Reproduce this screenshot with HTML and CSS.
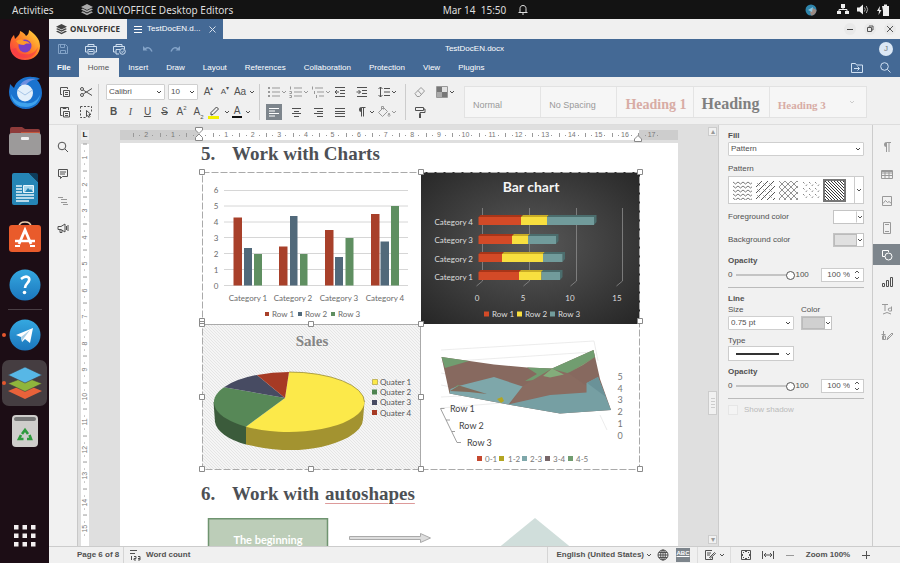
FILE: index.html
```html
<!DOCTYPE html>
<html lang="en">
<head>
<meta charset="utf-8">
<title>TestDocEN.docx - ONLYOFFICE</title>
<link rel="stylesheet" href="styles.css">
</head>
<body>
<svg class="sprite" aria-hidden="true">
  <defs>
    <symbol id="caret" viewBox="0 0 6 6"><path d="M1 2l2 2 2-2" fill="none" stroke="currentColor"/></symbol>
    <symbol id="list" viewBox="0 0 16 16"><path d="M6 4h8M6 8h8M6 12h8" stroke="currentColor" fill="none"/><path d="M2 4h2M2 8h2M2 12h2" stroke="currentColor" stroke-width="2"/></symbol>
    <symbol id="stack" viewBox="0 0 12 12"><path d="M6 0l6 3-6 3-6-3z"/><path d="M0 5.400l1.800-.9L6 6.700l4.200-2.200 1.800.9-6 3z"/><path d="M0 8.200l1.800-.9L6 9.500l4.200-2.200 1.800.9-6 3z"/></symbol>
    <pattern id="weave" width="3" height="3" patternUnits="userSpaceOnUse"><path d="M0 0l3 3" stroke="#dedede" stroke-width=".7"/></pattern>
    <pattern id="p-zig" width="5" height="4" patternUnits="userSpaceOnUse"><path d="M0 1l2.500 2L5 1" fill="none" stroke="#555" stroke-width=".8"/></pattern>
    <pattern id="p-slash" width="6" height="6" patternUnits="userSpaceOnUse"><path d="M0 6l6-6" fill="none" stroke="#444" stroke-width=".9"/><path d="M1 2l3 3" fill="none" stroke="#777" stroke-width=".6"/></pattern>
    <pattern id="p-diamond" width="6" height="6" patternUnits="userSpaceOnUse"><path d="M0 0l6 6M0 6l6-6" fill="none" stroke="#666" stroke-width=".7"/></pattern>
    <pattern id="p-dash" width="6" height="6" patternUnits="userSpaceOnUse"><path d="M1 1l1.500 1.500M5 3.500L3.800 5" stroke="#666" stroke-width=".8"/></pattern>
    <pattern id="p-diag" width="3" height="3" patternUnits="userSpaceOnUse"><path d="M-1-1l5 5M-1 2l2 2M2-1l2 2" stroke="#222" stroke-width=".9"/></pattern>
    <radialGradient id="dark" cx=".5" cy=".48" r=".7"><stop offset="0" stop-color="#595959"/><stop offset="1" stop-color="#272727"/></radialGradient>
    <linearGradient id="fox" x1="0" y1="1" x2="1" y2="0"><stop offset="0" stop-color="#f5294d"/><stop offset=".5" stop-color="#ff7a26"/><stop offset="1" stop-color="#ffe23f"/></linearGradient>
    <linearGradient id="sky" x1="0" y1="0" x2="0" y2="1"><stop offset="0" stop-color="#35a8e0"/><stop offset="1" stop-color="#1b76bd"/></linearGradient>
  </defs>
</svg>

<header class="sysbar">
  <button class="activities">Activities</button>
  <button class="sys-app"><svg width="12" height="12"><use href="#stack"/></svg>ONLYOFFICE Desktop Editors</button>
  <div class="clock"><time>Mar 14&nbsp; 15:50</time>
    <svg width="10" height="11" viewBox="0 0 10 11" fill="none" stroke="currentColor"><path d="M2 8V4.500C2 2.500 3.300 1.500 5 1.500S8 2.500 8 4.500V8M.5 8.500h9M4 10h2"/></svg>
  </div>
  <div class="tray">
    <svg width="12" height="12" viewBox="0 0 12 12"><circle cx="6" cy="6" r="5.500" fill="#2f86ad"/><path d="M6 11.500A5.500 5.500 0 0 0 11.500 6L8 4 5 8z" fill="#9b8a83"/><path d="M3 6l5-3-1 5z" fill="#8cc7df"/></svg>
    <svg class="net" width="12" height="11" viewBox="0 0 12 11" fill="#eee"><path d="M4 0h4v4H4zM0 7h4v3H0zM8 7h4v3H8z"/><path d="M6 3v3M2 8V5.500h8V8" fill="none" stroke="#eee"/></svg>
    <svg width="12" height="11" viewBox="0 0 12 11" fill="#eee"><path d="M0 3.500h2.500L6 .5v10l-3.500-3H0z"/><path d="M7.500 3.500q1.500 2 0 4M9.300 2q2.700 3.500 0 7" fill="none" stroke="#aaa"/></svg>
    <svg width="13" height="12" viewBox="0 0 13 12" fill="#eee"><path d="M5 2h2V.5h3V2h2v10H6V7z"/><path d="M3 2L0 7h2l-.5 4 3-5h-2z"/></svg>
  </div>
</header>

<div class="desktop">
  <nav class="dock" aria-label="Dock">
    <button aria-label="Firefox"><svg width="32" height="32" viewBox="0 0 32 32"><path d="M16 31C7 31 1 25 1 17 1 11 3 8 5 6l1 4 3-3c2-2 2-4 2-5 3 1 5 3 6 5 2-1 3-3 3-6 6 4 11 9 11 16 0 8-6 14-15 14z" fill="url(#fox)"/><path d="M3 20c2 5 6 8 12 9 8 1 13-5 14-11-3 6-8 8-14 7-5 0-7-3-8-6z" fill="#f4364c" opacity=".6"/><circle cx="16" cy="17" r="6.500" fill="#7b3fc4"/><path d="M7 12c3-2 6-2 8 0 3 0 5 1 6 3-3-1-5 0-6 1-4 0-6-1-8-4z" fill="#ff9a2a"/></svg></button>
    <button aria-label="Thunderbird"><svg width="34" height="34" viewBox="0 0 34 34"><path d="M18 33C8 33 1 25 1 16c0-3 1-5 1-8l4 4C9 4 16 0 24 1c2 0 5 0 8 2l-3 1c3 3 5 8 5 13 0 9-7 16-16 16z" fill="#1a73cf"/><path d="M3 18C4 28 11 31 18 31c8 0 13-5 14-12-3 6-8 9-14 8C11 27 6 24 3 18z" fill="#3fa3ee"/><path d="M12 9C16 3 22 2 28 3c-5 1-8 3-10 6z" fill="#6d8fe0"/><ellipse cx="17" cy="17" rx="8" ry="8.500" fill="#e3effa"/><path d="M9.500 14l7.500 5 7.500-5" fill="none" stroke="#a7c5e6"/></svg></button>
    <button aria-label="Files"><svg width="32" height="30" viewBox="0 0 32 30"><path d="M1 3a2 2 0 0 1 2-2h10l3 2h13a2 2 0 0 1 2 2v8H1z" fill="#8e3b3a"/><path d="M12 6h19v6H12z" fill="#c4573d"/><rect y="7" width="32" height="22" rx="3" fill="#9c9a9a"/><rect x="12" y="11" width="8" height="3" rx="1" fill="#f2f2f2"/></svg></button>
    <button aria-label="LibreOffice Writer"><svg width="26" height="32" viewBox="0 0 26 32"><path d="M2 0h15l9 9v21a2 2 0 0 1-2 2H2a2 2 0 0 1-2-2V2a2 2 0 0 1 2-2z" fill="#2585b5"/><path d="M17 0l9 9V2a2 2 0 0 0-2-2z" fill="#0d3d5c"/><path d="M4 13h6M4 16h6M4 19h6M4 22h18M4 25h18M4 28h13" stroke="#e8f5fb" stroke-width="1.500"/><path d="M11.500 12.500h10v7h-10z" fill="#a9d8ec" stroke="#e8f5fb"/><path d="M13 19l3-4 2 2 1-1 2 3z" fill="#2585b5"/></svg></button>
    <button aria-label="Ubuntu Software"><svg width="32" height="32" viewBox="0 0 32 32"><path d="M10 6q0-5 6-5t6 5" fill="none" stroke="#e9cfae" stroke-width="1.500"/><rect y="4" width="32" height="27" rx="3" fill="#e95b2b"/><path d="M10 23l6-14 6 14" fill="none" stroke="#fff" stroke-width="2.800"/><path d="M6 20h20" stroke="#fff" stroke-width="2.500"/><path d="M6 25h5M21 25h5" stroke="#fff" stroke-width="2"/></svg></button>
    <button aria-label="Help"><svg width="32" height="32" viewBox="0 0 32 32"><circle cx="16" cy="16" r="15.500" fill="url(#sky)"/><path d="M12 10q5-4 8-1c2 4-4 5-4 10" fill="none" stroke="#fff" stroke-width="2.600"/><circle cx="15.500" cy="23.500" r="1.800" fill="#fff"/></svg></button>
    <hr>
    <button class="running" aria-label="Telegram"><svg width="32" height="32" viewBox="0 0 32 32"><circle cx="16" cy="16" r="15.500" fill="url(#sky)"/><path d="M7 16l17-7-3 15-5-4-3 3-1-5z" fill="#fff"/><path d="M12 18l9-7-6 8-2 3z" fill="#a9cfe6"/></svg></button>
    <button class="running current" aria-label="ONLYOFFICE"><svg width="34" height="33" viewBox="0 0 34 33"><path d="M17 17l17 7-17 8L0 24z" fill="#e8623a"/><path d="M17 10l17 6.500-17 8-17-8z" fill="#8fb53c" stroke="#453d41" stroke-width=".6"/><path d="M17 0l17 8-17 8L0 8z" fill="#57b7e6" stroke="#453d41" stroke-width=".6"/></svg></button>
    <button aria-label="Trash"><svg width="26" height="32" viewBox="0 0 26 32"><rect width="26" height="32" rx="4" fill="#cfcdcb"/><rect x="2" y="2" width="22" height="4" rx="2" fill="#777"/><g fill="none" stroke="#2f9a3c" stroke-width="2.600"><path d="M10 19l3-4 3 4"/><path d="M17.500 20l1.500 4h-4M11.500 24H7l2-4"/></g></svg></button>
    <button class="apps" aria-label="Show applications"><svg width="22" height="22" viewBox="0 0 22 22" fill="#f3eff0"><path d="M0 0h4.500v4.500H0zM8.500 0H13v4.500H8.500zM17 0h4.500v4.500H17zM0 8.500h4.500V13H0zM8.500 8.500H13V13H8.500zM17 8.500h4.500V13H17zM0 17h4.500v4.500H0zM8.500 17H13v4.500H8.500zM17 17h4.500v4.500H17z"/></svg></button>
  </nav>

  <div class="app">
    <div class="tabs">
      <button class="tab brand"><svg width="11" height="11"><use href="#stack"/></svg>ONLYOFFICE</button>
      <div class="tab open"><svg width="8" height="8" viewBox="0 0 8 8" stroke="#fff"><path d="M0 1.500h8M0 4.500h8M0 7.500h8"/></svg><span>TestDocEN.d...</span><button aria-label="Close tab"><svg width="7" height="7" viewBox="0 0 7 7" stroke="#d5dfeb"><path d="M.5.5l6 6M6.500.5l-6 6"/></svg></button></div>
      <div class="window">
        <button aria-label="Minimize"><svg width="8" height="8" viewBox="0 0 8 8"><path d="M1 4.500h6" stroke="#444"/></svg></button>
        <button aria-label="Restore"><svg width="8" height="8" viewBox="0 0 8 8" fill="none" stroke="#555"><path d="M1.500 2.500h4v4h-4zM3 1.500V1h4v4h-1"/></svg></button>
        <button aria-label="Close"><svg width="8" height="8" viewBox="0 0 8 8" stroke="#555"><path d="M1 1l6 6M7 1L1 7"/></svg></button>
      </div>
    </div>

    <div class="head">
      <div class="titlebar">
        <div class="quick">
          <button aria-label="Save" class="dim"><svg width="12" height="12" viewBox="0 0 12 12" fill="none" stroke="currentColor"><path d="M1.500 1.500h7l2 2v7h-9zM3.500 1.500v3h4v-3M3.500 10.500v-3h5v3"/></svg></button>
          <button aria-label="Print"><svg width="12" height="12" viewBox="0 0 12 12" fill="none" stroke="currentColor"><path d="M3 3.500v-2h6v2M2.500 9H.5V3.500h11V9h-2M3 6.500h6v4.500H3zM4 8.500h4"/></svg></button>
          <button aria-label="Quick print"><svg width="13" height="12" viewBox="0 0 13 12" fill="none" stroke="currentColor"><path d="M3 3.500v-2h6v2M2.500 9H.5V3.500h11V6M6 11H3V6.500h4"/><circle cx="9.500" cy="8.500" r="2.800"/><path d="M8.300 8.500l1 1 1.500-2"/></svg></button>
          <button aria-label="Undo" class="dim"><svg width="11" height="8" viewBox="0 0 11 8"><path d="M1 1v4.500h4.500z" fill="currentColor"/><path d="M3 4q4-3.500 7 2.500" fill="none" stroke="currentColor" stroke-width="1.500"/></svg></button>
          <button aria-label="Redo" class="dim"><svg width="11" height="8" viewBox="0 0 11 8"><path d="M10 1v4.500H5.500z" fill="currentColor"/><path d="M8 4Q4 .5 1 6.500" fill="none" stroke="currentColor" stroke-width="1.500"/></svg></button>
        </div>
        <div class="doc-name">TestDocEN.docx</div>
        <button class="avatar" aria-label="User">J</button>
      </div>
      <nav class="menu">
        <button class="file">File</button><button class="active">Home</button><button>Insert</button><button>Draw</button><button>Layout</button><button>References</button><button>Collaboration</button><button>Protection</button><button>View</button><button>Plugins</button>
        <span class="menu-end">
          <button aria-label="Open file location"><svg width="12" height="10" viewBox="0 0 12 10" fill="none" stroke="#cfe0f2"><path d="M.5.5h4l1 1.500h6v7.500H.5zM3 5.500h5M6.500 3.500l2 2-2 2"/></svg></button>
          <button aria-label="Search"><svg width="11" height="11" viewBox="0 0 11 11" fill="none" stroke="#cfe0f2"><circle cx="4.500" cy="4.500" r="3.800"/><path d="M7.500 7.500l3 3"/></svg></button>
        </span>
      </nav>
    </div>

    <div class="toolbar">
      <div class="group clip">
        <div class="row">
          <button aria-label="Copy"><svg width="12" height="12" viewBox="0 0 12 12" fill="none" stroke="currentColor"><path d="M3 8.500H1.500v-7h7V3M4.500 4.500h6v6h-6zM6 6.500h3M6 8.500h3"/></svg></button>
          <button aria-label="Cut"><svg width="12" height="12" viewBox="0 0 12 12" fill="none" stroke="currentColor"><circle cx="2" cy="3" r="1.500"/><circle cx="2" cy="9" r="1.500"/><path d="M3.200 4L12 9.500M3.200 8L12 2.500"/></svg></button>
        </div>
        <div class="row">
          <button aria-label="Paste"><svg width="12" height="12" viewBox="0 0 12 12" fill="none" stroke="currentColor"><path d="M3.500 9.500h-2v-8h8V4M4 1.500v1h3v-1M4.500 5.500h6v5.500h-6zM6 7.500h3M6 9.500h3"/></svg></button>
          <button aria-label="Select"><svg width="12" height="12" viewBox="0 0 12 12" fill="none" stroke="currentColor"><path d="M.5.500h11v5M.5.500v11H6" stroke-dasharray="2 1.500"/><path d="M6.500 4.500v6l1.500-1 1 2 1-1-1-2h2z"/></svg></button>
        </div>
      </div>
      <div class="group font">
        <div class="row">
          <select class="family" aria-label="Font"><option>Calibri</option></select>
          <select class="size" aria-label="Font size"><option>10</option></select>
          <button aria-label="Increase font size">A<sup>▴</sup></button><button aria-label="Decrease font size" class="smaller">A<sup>▾</sup></button><button class="wide" aria-label="Change case">Aa<svg width="6" height="6"><use href="#caret"/></svg></button>
        </div>
        <div class="row marks">
          <button><b>B</b></button><button><i class="serif">I</i></button><button><u>U</u></button><button><s>S</s></button><button>A<sup>2</sup></button><button>A<sub>2</sub></button>
          <button class="wide" aria-label="Highlight color"><svg width="13" height="13" viewBox="0 0 13 13"><path d="M3 9V6.500L8.500 1l2 2L5 8.500z" fill="none" stroke="#444"/><path d="M0 11.500h11" stroke="#f3f000" stroke-width="3"/></svg><svg width="6" height="6"><use href="#caret"/></svg></button>
          <button class="wide" aria-label="Font color"><span class="fontcolor">A</span><svg width="6" height="6"><use href="#caret"/></svg></button>
        </div>
      </div>
      <div class="group para">
        <div class="row">
          <button class="off" aria-label="Bullets"><svg width="16" height="16"><use href="#list"/></svg><svg width="6" height="6"><use href="#caret"/></svg></button>
          <button class="off" aria-label="Numbering"><svg width="16" height="16" viewBox="0 0 16 16" fill="none" stroke="currentColor"><path d="M6 4h8M6 8h8M6 12h8M2.500 2.500v3M1.500 7.500h2v2h-2M1.500 11.500h2v2h-2"/></svg><svg width="6" height="6"><use href="#caret"/></svg></button>
          <button class="off" aria-label="Multilevel list"><svg width="16" height="16" viewBox="0 0 16 16" fill="none" stroke="currentColor"><path d="M5 4h8M7 8h7M9 12h5M2.500 2.500v3M4.500 7v3M6.500 11v3"/></svg><svg width="6" height="6"><use href="#caret"/></svg></button>
          <button aria-label="Decrease indent"><svg width="16" height="16" viewBox="0 0 16 16" fill="none" stroke="currentColor"><path d="M3 3.500h10M8 6.500h5M8 9.500h5M3 12.500h10M7 8H3M5 6L3 8l2 2"/></svg></button>
          <button aria-label="Increase indent"><svg width="16" height="16" viewBox="0 0 16 16" fill="none" stroke="currentColor"><path d="M3 3.500h10M8 6.500h5M8 9.500h5M3 12.500h10M2.500 8h4M4.500 6l2 2-2 2"/></svg></button>
          <button aria-label="Line spacing"><svg width="16" height="16" viewBox="0 0 16 16" fill="none" stroke="currentColor"><path d="M8 4.500h6M8 8h6M8 11.500h6M4.500 3v10M2.500 5l2-2 2 2M2.500 11l2 2 2-2"/></svg><svg width="6" height="6"><use href="#caret"/></svg></button>
        </div>
        <div class="row">
          <button aria-label="Align left"><svg class="pressed" width="16" height="16" viewBox="0 0 16 16" stroke="currentColor"><path d="M3 4.500h10M3 7h6M3 9.500h10M3 12h6"/></svg></button>
          <button aria-label="Align center"><svg width="16" height="16" viewBox="0 0 16 16" stroke="currentColor"><path d="M4 4.500h9M6 7.500h5M4 9.500h9M6 12.500h5"/></svg></button>
          <button aria-label="Align right"><svg width="16" height="16" viewBox="0 0 16 16" stroke="currentColor"><path d="M4 4.500h9M7 7.500h6M4 9.500h9M7 12.500h6"/></svg></button>
          <button aria-label="Justify"><svg width="16" height="16" viewBox="0 0 16 16" stroke="currentColor"><path d="M3 4.500h10M3 7.500h10M3 9.500h10M3 12.500h10"/></svg></button>
          <button aria-label="Nonprinting characters"><svg width="16" height="16" viewBox="0 0 16 16"><path d="M7.500 12.500v-9h4M9.500 3.500v9" fill="none" stroke="currentColor"/><path d="M7.500 3a2.500 2.500 0 0 0 0 5z" fill="currentColor"/></svg><svg width="6" height="6"><use href="#caret"/></svg></button>
          <button class="off" aria-label="Shading"><svg width="16" height="16" viewBox="0 0 16 16" fill="none" stroke="currentColor"><path d="M2.500 8.500l5-5 4 4-5 5zM5.500 5.500V2.500h2v3M13 9q-2 3 0 3.500 2-.5 0-3.500"/></svg><svg width="6" height="6"><use href="#caret"/></svg></button>
        </div>
      </div>
      <div class="group misc">
        <div class="row">
          <button class="off" aria-label="Clear style"><svg width="16" height="16" viewBox="0 0 16 16" fill="none" stroke="currentColor"><path d="M3 9.500l6-6 3.500 3.500-5 5.500H5zM6 6.500l3.500 4"/></svg></button>
          <button aria-label="Color scheme"><svg width="16" height="16" viewBox="0 0 16 16"><path d="M3 3h5v5H3z" fill="#777"/><path d="M8 3h5v5H8z" fill="#e2e2e2"/><path d="M3 8h5v5H3z" fill="#aaa"/><path d="M8 8h5v5H8z" fill="#777"/><path d="M2.500 2.500h11v11h-11z" fill="none" stroke="#999"/></svg><svg width="6" height="6"><use href="#caret"/></svg></button>
        </div>
        <div class="row">
          <button aria-label="Copy style"><svg width="16" height="16" viewBox="0 0 16 16" fill="none" stroke="currentColor"><path d="M3.500 3.500h8v3h-8zM11.500 5h1.500v3.500H8V10"/><path d="M8 9.500V14" stroke-width="2"/></svg></button>
        </div>
      </div>
      <div class="styles">
        <button>Normal</button><button>No Spacing</button><button class="h1">Heading 1</button><button class="h2">Heading</button><button class="h3">Heading 3</button>
        <button class="more" aria-label="More styles"><svg width="6" height="6"><use href="#caret"/></svg></button>
      </div>
    </div>

    <div class="work">
      <aside class="left">
        <button aria-label="Find"><svg width="12" height="12" viewBox="0 0 12 12" fill="none" stroke="currentColor"><circle cx="5" cy="5" r="3.800"/><path d="M8 8l3 3"/></svg></button>
        <button aria-label="Comments"><svg width="12" height="12" viewBox="0 0 12 12" fill="none" stroke="currentColor"><path d="M1.500 1.500h9v7h-5l-2 2v-2h-2zM3 4h6M3 6h5"/></svg></button>
        <button aria-label="Headings" class="faint"><svg width="12" height="12" viewBox="0 0 12 12" stroke="currentColor"><path d="M1 2.500h5M4 4.500h6M4 7.500h6M6 9.500h5"/></svg></button>
        <button aria-label="Feedback"><svg width="12" height="12" viewBox="0 0 12 12" fill="none" stroke="currentColor"><path d="M1 4.500h3L8 2v8L4 7.500H1zM3 8v2.500h2V8M9.500 4v4M11 3v6"/></svg></button>
      </aside>

      <div class="vside">
        <span class="corner">L</span>
        <div class="vruler">
          <span>1</span><span>2</span><span>3</span><span>4</span><span>5</span><span>6</span><span>7</span><span>8</span><span>9</span><span>10</span><span>11</span><span>12</span><span>13</span><span>14</span><span>15</span>
        </div>
      </div>

      <main class="canvas">
        <div class="hruler">
          <span>2</span><span>1</span><span class="zero"></span><span>1</span><span>2</span><span>3</span><span>4</span><span>5</span><span>6</span><span>7</span><span>8</span><span>9</span><span>10</span><span>11</span><span>12</span><span>13</span><span>14</span><span>15</span><span>16</span><span>17</span>
          <svg class="indent start" width="8" height="14" viewBox="0 0 8 14" fill="#fff" stroke="#888"><path d="M.5.500h7v2.500L4 6.500.5 3zM4 7l3.500 3.500v3h-7v-3z"/></svg>
          <svg class="indent end" width="8" height="7" viewBox="0 0 8 7" fill="#fff" stroke="#888"><path d="M4 .5L7.500 4v2.500h-7V4z"/></svg>
        </div>
        <article class="page">
          <h1><span>5.</span>Work with Charts</h1>
          <div class="charts">
            <svg viewBox="202 172 219 152" role="img" aria-label="Column chart">
              <path d="M224 190.500h184M224 206h184M224 222h184M224 237.500h184M224 253.500h184M224 269.500h184M224 285.500h184" stroke="#d6d6d6"/>
              <g fill="#a8402a"><path d="M233.500 217.500h8.500v68h-8.500zM279 246.500h8.500v39H279zM325 230h8.500v55.500H325zM371 214h8.500v71.500H371z"/></g>
              <g fill="#51697a"><path d="M244 248h8v37.500h-8zM290 216h7.500v69.500H290zM335 257h8v28.500h-8zM380.500 241.500h8.500v44h-8.500z"/></g>
              <g fill="#5f8f61"><path d="M254 254h8v31.500h-8zM300 254h7.500v31.500H300zM345.500 238h8v47.500h-8zM391 206h8v79.500h-8z"/></g>
              <g class="lato" fill="#6b6b6b" text-anchor="middle"><text x="216" y="193">6</text><text x="216" y="209">5</text><text x="216" y="225">4</text><text x="216" y="241">3</text><text x="216" y="257">2</text><text x="216" y="273">1</text><text x="216" y="289">0</text>
              <text x="248" y="301">Category 1</text><text x="293" y="301">Category 2</text><text x="339" y="301">Category 3</text><text x="385" y="301">Category 4</text></g>
              <g class="lato" fill="#6b6b6b"><text x="272" y="317">Row 1</text><text x="305" y="317">Row 2</text><text x="338" y="317">Row 3</text></g>
              <path d="M265 312h4v4h-4z" fill="#a8402a"/><path d="M298 312h4v4h-4z" fill="#51697a"/><path d="M331 312h4v4h-4z" fill="#5f8f61"/>
            </svg>
            <svg viewBox="421 172 219 152" role="img" aria-label="Bar chart">
              <path d="M421 172h219v152H421z" fill="url(#dark)"/>
              <text class="lato t14" x="531" y="192" fill="#f5f5f5" text-anchor="middle">Bar chart</text>
              <path d="M482.500 208v73l-6 5M529.500 208v73l-6 5M576.500 208v73l-6 5M622.500 208v73l-6 5" fill="none" stroke="#8c8c8c" stroke-width=".8"/>
              <g fill="#a83518"><path d="M478.500 217l2-2h42l-2 2zM478.500 236l2-2h34l-2 2zM478.500 254l2-2h24l-2 2zM478.500 272l2-2h41l-2 2z"/></g>
              <g fill="#c9ac25"><path d="M521 217l2-2h26l-2 2zM512 236l2-2h16l-2 2zM502 254l2-2h41l-2 2zM519 272l2-2h23l-2 2z"/></g>
              <g fill="#4b6d6d"><path d="M547 217l2-2h47.500v7l-2.500 3v-8zM528 236l2-2h28.500v7l-2.500 3v-8zM543 254l2-2h20v7l-2.500 3v-8zM541 272l2-2h19.500v7l-2.500 3v-8z"/></g>
              <g fill="#d34a27"><path d="M478.500 217H521v8h-42.500zM478.500 236H512v8h-33.500zM478.500 254H502v8h-23.500zM478.500 272H519v8h-40.500z"/></g>
              <g fill="#f8df3f"><path d="M521 217h26v8h-26zM512 236h16v8h-16zM502 254h41v8h-41zM519 272h22.500v8H519z"/></g>
              <g fill="#719b9b"><path d="M547 217h47v8h-47zM528 236h28v8h-28zM543 254h19.500v8H543zM541.500 272H560v8h-18.500z"/></g>
              <g class="lato" fill="#dedede" text-anchor="end"><text x="473" y="225">Category 4</text><text x="473" y="243">Category 3</text><text x="473" y="262">Category 2</text><text x="473" y="280">Category 1</text></g>
              <g class="lato" fill="#dedede" text-anchor="middle"><text x="477" y="301">0</text><text x="523" y="301">5</text><text x="570" y="301">10</text><text x="617" y="301">15</text></g>
              <g class="lato" fill="#dedede"><text x="492" y="317">Row 1</text><text x="525" y="317">Row 2</text><text x="558" y="317">Row 3</text></g>
              <path d="M484 311.500h5v5h-5z" fill="#d34a27"/><path d="M517 311.500h5v5h-5z" fill="#f8df3f"/><path d="M550 311.500h5v5h-5z" fill="#719b9b"/>
            </svg>
            <svg viewBox="202 324 219 145" role="img" aria-label="Sales pie chart">
              <path d="M202 324h219v145H202z" fill="#f5f5f5"/><path d="M202 324h219v145H202z" fill="url(#weave)"/>
              <text class="title" x="312" y="346" fill="#858585" text-anchor="middle">Sales</text>
              <path d="M213.500 402l1.500 20a75.500 30 0 0 0 31 22.500v-18z" fill="#3b5b3b"/>
              <path d="M246 426.500v18q60 14 102-7 15-9 15-18l1.500-17.500-60 20z" fill="#a39330"/>
              <path d="M285 398l4-26a75.500 30 0 1 1-43 54.700z" fill="#fce94a"/>
              <path d="M285 398l-39 28.700a75.500 30 0 0 1-22-39.500z" fill="#578857"/>
              <path d="M285 398l-61-10.800a75.500 30 0 0 1 33-12.300z" fill="#474b62"/>
              <path d="M285 398l-28-23.100A75.500 30 0 0 1 289 372z" fill="#a63a24"/>
              <path d="M289 372a75.500 30 0 0 1 75.500 30" fill="none" stroke="#8c7f2b" stroke-width=".7"/>
              <path d="M372.500 379.500h5v5h-5z" fill="#fce94a" stroke="#a39330" stroke-width=".6"/><path d="M372 389.500h5v5h-5z" fill="#4e8451"/><path d="M372 400h5v5h-5z" fill="#474b62"/><path d="M372 410h5v5h-5z" fill="#a63a24"/>
              <g class="lato" fill="#555"><text x="380" y="385">Quater 1</text><text x="380" y="395">Quater 2</text><text x="380" y="405">Quater 3</text><text x="380" y="416">Quater 4</text></g>
            </svg>
            <svg viewBox="421 324 219 145" role="img" aria-label="Surface chart">
              <path d="M441 350l153-9 4 20M441 362l152-10M441 373l10 2M441 385l10 2M441 397l20-1M441 408l60-5M600 415l7 15" fill="none" stroke="#e4e4e4" stroke-width=".7"/>
              <path d="M441.500 357L494 364.500 527 367.500 552 368.500 593.500 350 600 379 611 410 560 413.500 508 404.500 449.500 393.500z" fill="#87695f"/>
              <path d="M441.500 357l27.500 4-24 7zM527 367.500l25 1 41.500-18.500 1.500 7-25 15-15 6-30 3 12-7zM449 391l9-6 16 5z" fill="#719d70"/>
              <path d="M552 368.500l-30 18-12 17.500 40-9 36-1.500v-8l-17-12-15-4z" fill="#8a6c61"/>
              <path d="M543 376l9-7.500 12 6-14 3zM570 372l25-15-12 8z" fill="#83ad7b"/>
              <path d="M449.500 393.500l1-4.500 8-3L494 377l28.500 9.500-14 18z" fill="#7ea7aa"/>
              <path d="M450 391l9-5.500 28 8.500-18-2z" fill="#826c5c"/>
              <path d="M508 404.500L550 395l36.500-2.500V383l11.500-6 13 33-51 3.500z" fill="#769fa3"/>
              <path d="M587 383l11-6 8 20z" fill="#6a9298"/>
              <path d="M497 399l5-2 2 4-3 2z" fill="#b3a522"/>
              <path d="M440.500 408.500h4M440.500 408.500L457 442.500h4M446 420h4M452 431.500h3" fill="none" stroke="#888" stroke-width=".8"/>
              <g class="lato t9" fill="#444"><text x="450" y="412">Row 1</text><text x="459" y="429">Row 2</text><text x="467" y="446">Row 3</text></g>
              <g class="lato t9" fill="#777" text-anchor="middle"><text x="620" y="380">5</text><text x="620" y="392">4</text><text x="620" y="403">3</text><text x="620" y="415">2</text><text x="620" y="427">1</text><text x="620" y="439">0</text></g>
              <path d="M477 456h5v5h-5z" fill="#c5482f"/><path d="M499 456h5v5h-5z" fill="#b3a522"/><path d="M522 456h5v5h-5z" fill="#7ea7aa"/><path d="M545 456h5v5h-5z" fill="#776669"/><path d="M568 456h5v5h-5z" fill="#719d70"/>
              <g class="lato" fill="#777"><text x="485" y="462">0-1</text><text x="508" y="462">1-2</text><text x="530" y="462">2-3</text><text x="553" y="462">3-4</text><text x="576" y="462">4-5</text></g>
            </svg>
            <svg class="handles" viewBox="202 172 438 297" aria-hidden="true">
              <g fill="none" stroke="#aaa"><path d="M202.500 172.500h437v297h-437z" stroke-dasharray="7 2"/><path d="M202 324.500h219M420.500 324v145"/></g>
              <g fill="#fff" stroke="#8a8a8a"><path d="M199.500 169.500h5v5h-5zM418.500 169.500h5v5h-5zM637.500 169.500h5v5h-5zM199.500 318.500h5v5h-5zM637.500 318.500h5v5h-5zM199.500 321.500h5v5h-5zM308.500 321.500h5v5h-5zM418.500 321.500h5v5h-5zM199.500 394.500h5v5h-5zM418.500 394.500h5v5h-5zM199.500 466.500h5v5h-5zM308.500 466.500h5v5h-5zM418.500 466.500h5v5h-5zM637.500 466.500h5v5h-5z"/></g>
            </svg>
          </div>
          <h1 class="second"><span>6.</span>Work with <em>autoshapes</em></h1>
          <svg class="shapes" viewBox="202 518 438 36" role="img" aria-label="Flowchart shapes">
            <path d="M208.500 518.800h119v40h-119z" fill="#bccdb8" stroke="#6f9470" stroke-width="1.500"/>
            <text class="lato t11" x="268" y="544" fill="#fff" text-anchor="middle">The beginning</text>
            <path d="M349.500 536.500h71v-3l10 4.500-10 4.500v-3h-71z" fill="#ddd" stroke="#aaa"/>
            <path d="M535 518l44 36h-88z" fill="#d0dedb"/>
          </svg>
        </article>
      </main>

      <div class="scroll">
        <button aria-label="Scroll up">▴</button>
        <span class="thumb"></span>
        <button aria-label="Scroll down">▾</button>
      </div>

      <aside class="panel">
        <label class="strong" for="fill">Fill</label>
        <select id="fill"><option>Pattern</option></select>
        <div class="label mt8">Pattern</div>
        <div class="patterns">
          <svg width="19" height="19"><path d="M0 0h19v19H0z" fill="url(#p-zig)"/></svg>
          <svg width="19" height="19"><path d="M0 0h19v19H0z" fill="url(#p-slash)"/></svg>
          <svg width="19" height="19"><path d="M0 0h19v19H0z" fill="url(#p-diamond)"/></svg>
          <svg width="19" height="19"><path d="M0 0h19v19H0z" fill="url(#p-dash)"/></svg>
          <svg class="sel" width="19" height="19"><path d="M0 0h19v19H0z" fill="url(#p-diag)"/></svg>
          <button aria-label="More patterns"><svg width="6" height="6"><use href="#caret"/></svg></button>
        </div>
        <div class="line mt6"><span>Foreground color</span><button class="swatch white" aria-label="Foreground color"><i></i><svg width="6" height="6"><use href="#caret"/></svg></button></div>
        <div class="line mt9"><span>Background color</span><button class="swatch" aria-label="Background color"><i></i><svg width="6" height="6"><use href="#caret"/></svg></button></div>
        <label class="strong mt9" for="fill-op">Opacity</label>
        <div class="line slider mt2"><span>0</span><input id="fill-op" type="range" value="100"><span>100</span><span class="spin"><input aria-label="Fill opacity" value="100 %"><svg width="6" height="12" viewBox="0 0 6 12" fill="none" stroke="#555"><path d="M1 4l2-2 2 2M1 8l2 2 2-2"/></svg></span></div>
        <hr>
        <div class="strong">Line</div>
        <div class="pair">
          <div><label for="size">Size</label><select id="size"><option>0.75 pt</option></select></div>
          <div><span class="label">Color</span><button class="swatch dark" aria-label="Line color"><i></i><svg width="6" height="6"><use href="#caret"/></svg></button></div>
        </div>
        <div class="label mt6">Type</div>
        <button class="type" aria-label="Line type"><i></i><svg width="6" height="6"><use href="#caret"/></svg></button>
        <label class="strong mt6" for="line-op">Opacity</label>
        <div class="line slider mt2"><span>0</span><input id="line-op" type="range" value="100"><span>100</span><span class="spin"><input aria-label="Line opacity" value="100 %"><svg width="6" height="12" viewBox="0 0 6 12" fill="none" stroke="#555"><path d="M1 4l2-2 2 2M1 8l2 2 2-2"/></svg></span></div>
        <hr>
        <label class="shadow"><input type="checkbox" disabled>Show shadow</label>
      </aside>

      <aside class="left right">
        <button class="faint" aria-label="Paragraph"><svg width="12" height="12" viewBox="0 0 12 12"><path d="M5.500 11V1.500H10M8 1.500V11" fill="none" stroke="currentColor"/><path d="M5.500 1a2.500 2.500 0 0 0 0 5z" fill="currentColor"/></svg></button>
        <button class="faint" aria-label="Table"><svg width="12" height="12" viewBox="0 0 12 12" fill="none" stroke="currentColor"><path d="M.5 2.500h11v8H.5zM.5 5h11M.5 7.500h11M4 2.500v8M8 2.500v8M.5 3.500h11"/></svg></button>
        <button class="faint" aria-label="Image"><svg width="12" height="12" viewBox="0 0 12 12" fill="none" stroke="currentColor"><path d="M1.500 1.500h9v9h-9zM2 8.500l2.500-3 2 2 1.500-1 2.500 2"/></svg></button>
        <button class="faint" aria-label="Header and footer"><svg width="12" height="12" viewBox="0 0 12 12" fill="none" stroke="currentColor"><path d="M2.500.500h7v11h-7zM4 2.500h4M4 9.500h4"/></svg></button>
        <button class="on" aria-label="Shape"><svg width="12" height="12" viewBox="0 0 12 12" fill="none" stroke="currentColor"><path d="M4 7.500H1.500v-6h6V3"/><circle cx="7.500" cy="7.500" r="3.500"/></svg></button>
        <button aria-label="Chart"><svg width="12" height="12" viewBox="0 0 12 12" fill="none" stroke="currentColor"><path d="M1.500 7.500h2v3h-2zM5.500 4.500h2v6h-2zM9.500 1.500h2v9h-2z"/></svg></button>
        <button class="faint" aria-label="Text Art"><svg width="12" height="12" viewBox="0 0 12 12" fill="none" stroke="currentColor"><path d="M1 1.500h6M4 1.500V8M10.500 3.500v4.500h-2q-2-.5-1-2.500 2-1 3 0M2 11q4-3 8 0"/></svg></button>
        <button class="faint" aria-label="Signature"><svg width="12" height="12" viewBox="0 0 12 12" fill="none" stroke="currentColor"><path d="M2.500 1v9M.5 4.500h4M4.500 6v3.500h-3v-3.500h3M6 10l1-3 4-4 1 1-4 4z"/></svg></button>
      </aside>
    </div>

    <footer class="status">
      <button class="pages">Page 6 of 8</button>
      <button class="words"><svg width="12" height="12" viewBox="0 0 12 12" fill="none" stroke="currentColor"><path d="M1 1.500h7M1 4.500h5M2.500 7v4M5 7.500h2v2H5v1.500h2M9 7.500h2v3.500H9M9 9.500h2"/></svg>Word count</button>
      <div class="status-end">
        <button class="lang">English (United States)<svg width="6" height="6"><use href="#caret"/></svg></button>
        <button aria-label="Document language"><svg width="12" height="12" viewBox="0 0 12 12" fill="none" stroke="currentColor"><circle cx="6" cy="6" r="5"/><ellipse cx="6" cy="6" rx="2.300" ry="5"/><path d="M1 6h10M2 3.500h8M2 8.500h8M6 1v10"/></svg></button>
        <button class="spell" aria-label="Spell checking">ABC</button>
        <button class="review" aria-label="Track changes"><svg width="12" height="12" viewBox="0 0 12 12" fill="none" stroke="currentColor"><path d="M8 1.500H1.500v9h7V8M3 4h4M3 6h3M5.500 8.500l5-5 1 1-5 4.500z"/></svg><svg width="6" height="6"><use href="#caret"/></svg></button>
        <button aria-label="Fit to page"><svg width="12" height="12" viewBox="0 0 12 12" fill="none" stroke="currentColor"><path d="M1.500 1.500h9v9h-9zM4 4l-1-1M8 4l1-1M4 8l-1 1M8 8l1 1M5 3l1-1 1 1M5 9l1 1 1-1M3 5L2 6l1 1M9 5l1 1-1 1"/></svg></button>
        <button aria-label="Fit to width"><svg width="12" height="12" viewBox="0 0 12 12" fill="none" stroke="currentColor"><path d="M.5 2v8M11.500 2v8M2 6h8M4 4L2 6l2 2M8 4l2 2-2 2"/></svg></button>
        <button class="faint" aria-label="Zoom out"><svg width="10" height="10" viewBox="0 0 10 10" stroke="currentColor"><path d="M1 5.500h8"/></svg></button>
        <button class="zoom">Zoom 100%</button>
        <button aria-label="Zoom in"><svg width="10" height="10" viewBox="0 0 10 10" stroke="currentColor"><path d="M1 5.500h8M5.500 1v8"/></svg></button>
      </div>
    </footer>
  </div>
</div>
</body>
</html>
```
FILE: styles.css
```css
* { box-sizing: border-box; }
body {
  margin: 0;
  height: 100vh;
  overflow: hidden;
  display: flex;
  flex-direction: column;
  font: 8px/10px "Liberation Sans", Arial, sans-serif;
  color: #505050;
}
button {
  border: 0;
  padding: 0;
  background: none;
  font: inherit;
  color: inherit;
  display: flex;
  align-items: center;
  justify-content: center;
}
svg { flex: none; display: block; }
.sprite { position: absolute; width: 0; height: 0; }

/* System bar */
.sysbar {
  flex: none;
  height: 19px;
  background: #131313;
  color: #dedede;
  font: 10px/18px "Noto Sans", sans-serif;
  display: grid;
  grid-template-columns: 69px 1fr auto 1fr;
  align-items: center;
  padding: 0 10px 0 12px;
}
.activities { justify-content: flex-start; }
.sys-app { justify-content: flex-start; gap: 4px; fill: #aaa; }
.clock { display: flex; align-items: center; gap: 12px; }
.tray { display: flex; justify-content: flex-end; align-items: center; gap: 8px; }
.net { margin-left: 12px; }

/* Dock */
.desktop { flex: 1; min-height: 0; display: flex; }
.dock {
  flex: none;
  width: 49px;
  background: #1c0d15;
  display: flex;
  flex-direction: column;
  align-items: center;
  padding: 2px 0 3px;
}
.dock button { flex: none; width: 100%; height: 48px; position: relative; }
.dock hr { width: 34px; height: 1px; margin: 0 0 1px; border: 0; background: #4a3f45; }
.dock .current { width: 45px; height: 46px; margin: 1px 0; border-radius: 7px; background: #453d41; }
.running::before {
  content: "";
  position: absolute;
  left: 2px;
  width: 4px;
  height: 4px;
  border-radius: 50%;
  background: #e4572e;
}
.current::before { left: 0; }
.dock .apps { margin-top: auto; }

/* Window tabs */
.app { flex: 1; min-width: 0; display: flex; flex-direction: column; background: #f0f0f0; }
.tabs { flex: none; display: flex; height: 20px; }
.tab { display: flex; align-items: center; }
.brand { width: 78px; gap: 3px; font: bold 8px/20px "Open Sans", sans-serif; color: #333; fill: #444; }
.open { width: 96px; background: #446995; color: #fff; padding: 0 7px; gap: 5px; }
.open span { flex: 1; white-space: nowrap; }
.window { margin-left: auto; display: flex; align-items: center; gap: 8px; padding-right: 4px; }
.window button { width: 12px; height: 12px; border-radius: 50%; background: #e9e9e9; }

/* Header */
.head { flex: none; background: #446995; color: #fff; }
.titlebar { height: 19px; display: grid; grid-template-columns: 1fr auto 1fr; align-items: center; }
.quick { display: flex; color: #cfdff0; }
.quick button { width: 28px; height: 19px; }
.quick .dim { color: #83a3c8; }
.avatar {
  justify-self: end;
  margin-right: 7px;
  width: 14px;
  height: 14px;
  border-radius: 50%;
  background: #dce8f5;
  color: #777;
}
.menu { display: flex; height: 19px; }
.menu > button { padding: 0 9px; }
.menu .file { font-weight: bold; padding: 0 8px; }
.menu .active { padding: 0 10px 0 9px; background: #f1f1f1; color: #555; }
.menu-end { margin-left: auto; padding-right: 9px; display: flex; gap: 17px; }

/* Toolbar */
.toolbar {
  flex: none;
  display: flex;
  align-items: flex-start;
  height: 48px;
  padding: 7px 33px 0 0;
  border-bottom: 1px solid #ddd;
}
.group { flex: none; display: flex; flex-direction: column; gap: 4px; height: 36px; border-right: 1px solid #ccc; }
.row { display: flex; height: 16px; align-items: center; }
.clip { width: 50px; padding-left: 5px; }
.clip button { width: 21px; }
.font { width: 161px; padding-left: 7px; font-size: 10px; }
.marks { margin-left: -1px; }
.font button { width: 17px; height: 16px; }
.font .smaller { width: 16px; font-size: 8px; }
.font .wide { width: 23px; gap: 3px; }
.font sup, .font sub { font-size: 6px; line-height: 6px; }
.font sup { align-self: flex-start; margin-top: 1px; }
.font sub { align-self: flex-end; }
.serif { font-family: "Liberation Serif", serif; }
.fontcolor { border-bottom: 2px solid #111; padding: 0 2px; line-height: 10px; }
select {
  appearance: none;
  height: 14px;
  width: 100%;
  margin: 0;
  padding: 0 3px 0 2px;
  border: 1px solid #cfcfcf;
  border-radius: 1px;
  color: #505050;
  font: inherit;
  background: #fff url("data:image/svg+xml,%3Csvg xmlns='http://www.w3.org/2000/svg' width='6' height='6'%3E%3Cpath d='M1 2l2 2 2-2' fill='none' stroke='%23444'/%3E%3C/svg%3E") no-repeat right 2px center;
}
.font select { height: 16px; font-size: 8px; }
.font .family { width: 59px; margin-right: 3px; }
.font .size { width: 30px; margin-right: 2px; }
.para { width: 146px; padding-left: 6px; }
.misc { width: 52px; padding-left: 6px; border: 0; }
.para button, .misc button { width: 22px; justify-content: flex-start; }
.para svg + svg, .misc svg + svg { margin-left: -1px; }
.off { color: #999; }
.pressed { background: #7d858c; color: #fff; }
.styles {
  flex: 1;
  min-width: 0;
  height: 32px;
  margin: 2px 0 0 6px;
  display: grid;
  grid-template-columns: repeat(5, minmax(0, 1fr)) 20px;
  border: 1px solid #e2e2e2;
  background: #f6f6f6;
  font-size: 9px;
  color: #999;
}
.styles button { justify-content: flex-start; padding: 5px 0 0 8px; overflow: hidden; white-space: nowrap; border-right: 1px solid #e4e4e4; }
.styles .h1, .styles .h2, .styles .h3 { font-family: "Liberation Serif", serif; font-weight: bold; color: #d8aca5; }
.styles .h1 { font-size: 14px; }
.styles .h2 { font-size: 16px; padding-top: 3px; color: #808080; }
.styles .h3 { font-size: 11px; border: 0; }
.styles .more { padding: 0 8px 0 0; justify-content: center; border: 0; color: #ccc; }

/* Workspace */
.work { flex: 1; min-height: 0; display: flex; background: #dfdfdf; }
.left {
  flex: none;
  width: 28px;
  background: #f1f1f1;
  display: flex;
  flex-direction: column;
  gap: 6px;
  padding-top: 11px;
}
.left button { width: 100%; height: 21px; }
.faint { color: #999; }
.right { border-left: 1px solid #ccc; }
.right .on { background: #7d858c; color: #fff; }
.vside { flex: none; width: 12px; padding: 5px 0 0 3px; display: flex; flex-direction: column; border-left: 1px solid #c8c8c8; }
.corner { height: 10px; background: #eee; font-weight: bold; text-align: center; color: #222; }
.vruler {
  flex: 1;
  min-height: 0;
  margin-top: 4px;
  padding-bottom: 4px;
  background: #fff;
  display: flex;
  flex-direction: column;
}
.vruler span {
  flex: 1;
  min-height: 0;
  writing-mode: vertical-rl;
  transform: rotate(180deg);
  text-align: center;
  line-height: 8px;
  font-size: 7px;
  color: #777;
  background:
    linear-gradient(#999, #999) center bottom / 4px 1px no-repeat,
    linear-gradient(#999, #999) 50% 25% / 1px 1px no-repeat,
    linear-gradient(#999, #999) 50% 75% / 1px 1px no-repeat;
}
.canvas { flex: 1; min-width: 0; display: flex; flex-direction: column; padding: 5px 29px 0 31px; overflow: hidden; }
.hruler {
  flex: none;
  height: 10px;
  margin-bottom: 3px;
  padding: 0 13px;
  display: flex;
  position: relative;
  background: linear-gradient(90deg, #cdcdcd 14%, #fff 14%, #fff 93%, #cdcdcd 93%);
}
.hruler span {
  flex: 1;
  text-align: center;
  font-size: 7px;
  color: #777;
  background:
    linear-gradient(#999, #999) left center / 1px 4px no-repeat,
    linear-gradient(#999, #999) 25% 50% / 1px 1px no-repeat,
    linear-gradient(#999, #999) 75% 50% / 1px 1px no-repeat;
}
.indent { position: absolute; }
.indent.start { left: 14%; top: -3px; margin-left: -3px; }
.indent.end { left: 93%; bottom: -2px; margin-left: -5px; }
.page { flex: 1; min-height: 0; overflow: hidden; background: #fff; padding: 0 38px 0 82px; color: #4d5055; }
h1 { margin: 0; font: bold 19px/22px "Liberation Serif", serif; display: flex; gap: 6px; white-space: nowrap; }
h1 span { width: 25px; margin-left: -1px; }
h1 em { font-style: normal; text-decoration: underline 1px #dd9a9a; text-underline-offset: 3px; }
h1.second { margin-top: 14px; }
.charts { position: relative; display: grid; grid-template-columns: 1fr 1fr; margin-top: 7px; }
.charts svg { width: 100%; height: auto; }
.charts .handles { position: absolute; inset: 0; overflow: visible; }
.shapes { width: 100%; height: auto; margin-top: 13px; }
.lato { font: 8px Lato, sans-serif; }
.t9 { font-size: 9px; }
.t11 { font-size: 11px; font-weight: bold; }
.t14 { font-size: 14px; font-weight: bold; }
.title { font: bold 15px "Liberation Serif", serif; }
.scroll { flex: none; width: 11px; padding: 2px 1px; display: flex; flex-direction: column; justify-content: space-between; }
.scroll button, .thumb { width: 9px; height: 9px; background: #f1f1f1; border: 1px solid #ccc; color: #999; line-height: 8px; }
.thumb {
  height: 24px;
  margin-top: auto;
  margin-bottom: 120px;
  background: #f1f1f1 repeating-linear-gradient(#ccc 0 1px, #f1f1f1 1px 3px) center / 4px 10px no-repeat;
}

/* Settings panel */
.panel { flex: none; width: 154px; background: #f1f1f1; border-left: 1px solid #ccc; padding: 6px 8px 0 9px; }
.panel label, .panel .label { display: block; line-height: 10px; }
.strong { font-weight: bold; line-height: 10px; }
.panel .mt2 { margin-top: 2px; }
.panel .mt6 { margin-top: 6px; }
.panel .mt8 { margin-top: 8px; }
.panel .mt9 { margin-top: 9px; }
.panel > select { display: block; margin-top: 1px; }
.panel hr { height: 1px; margin: 5px 0 6px; border: 0; background: #bbb; }
.patterns { display: flex; align-items: center; gap: 4px; height: 28px; margin-top: 2px; padding-left: 4px; background: #fff; border: 1px solid #ccc; }
.patterns .sel { outline: 2px solid #777; outline-offset: 0; }
.patterns button { margin-left: auto; width: 9px; height: 100%; border-left: 1px solid #ccc; }
.line { display: flex; align-items: center; height: 14px; }
.line .swatch { margin-left: auto; }
.swatch { width: 31px; height: 14px; border: 1px solid #c4c4c4; background: #fff; }
.swatch i { flex: 1; align-self: stretch; background: #e0e0e0; border: 1px solid #bbb; }
.swatch.white i { background: #fff; border-color: #fff #ccc #fff #fff; }
.swatch.dark i { background: #d0d0d0; }
.slider input[type="range"] {
  appearance: none;
  width: 59px;
  height: 10px;
  margin: 0 0 0 4px;
  background: linear-gradient(#c4c4c4, #c4c4c4) center / 100% 2px no-repeat;
}
.slider input[type="range"]::-webkit-slider-thumb {
  appearance: none;
  width: 9px;
  height: 9px;
  border: 1px solid #555;
  border-radius: 50%;
  background: #fff;
}
.spin { margin-left: auto; width: 43px; height: 14px; display: flex; align-items: center; background: #fff; border: 1px solid #ccc; padding-right: 3px; }
.spin input { flex: 1; min-width: 0; padding: 0 4px 0 0; border: 0; background: none; font: inherit; color: inherit; text-align: right; }
.pair { display: flex; gap: 7px; margin-top: 1px; }
.pair select { display: block; width: 66px; margin-top: 1px; }
.pair .swatch { margin-top: 1px; }
.type { width: 66px; height: 15px; background: #fff; border: 1px solid #ccc; padding: 0 2px 0 7px; }
.type i { width: 43px; height: 2px; background: #333; margin-right: auto; }
.panel .shadow { display: flex; align-items: center; gap: 6px; color: #bbb; }
.shadow input { appearance: none; width: 10px; height: 10px; margin: 0; border: 1px solid #e6e6e6; background: #f4f4f4; }

/* Status bar */
.status { flex: none; height: 17px; display: flex; border-top: 1px solid #ccc; font-weight: bold; }
.status > button { padding-left: 28px; border-right: 1px solid #d5d5d5; }
.status .pages { width: 75px; justify-content: flex-start; }
.status .words { padding-left: 5px; gap: 5px; border: 0; }
.status-end { margin-left: auto; display: flex; padding-right: 23px; }
.status-end button { width: 22px; }
.status-end .lang { width: auto; gap: 2px; padding: 0 0 0 8px; border-left: 1px solid #d5d5d5; }
.status-end .spell { width: 14px; height: 14px; margin: 1px 7px 0 2px; align-items: flex-start; background: #7d858c; color: #fff; font-size: 6px; text-decoration: underline; }
.status-end .review { width: 34px; gap: 3px; border-left: 1px solid #ddd; border-right: 1px solid #ddd; margin-right: 4px; }
.status-end .zoom { width: 54px; }
```
